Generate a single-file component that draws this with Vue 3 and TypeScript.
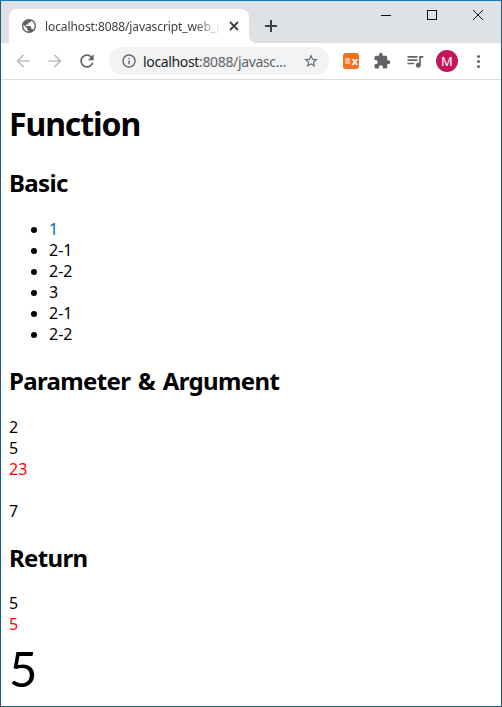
<template>
  <div class="window">
    <div class="tabstrip">
      <div class="tab">
        <svg class="favicon" viewBox="2 2 20 20"><path d="M12 2C6.48 2 2 6.48 2 12s4.48 10 10 10 10-4.48 10-10S17.52 2 12 2zm-1 17.93c-3.95-.49-7-3.85-7-7.93 0-.62.08-1.21.21-1.79L9 15v1c0 1.1.9 2 2 2v1.93zm6.9-2.54c-.26-.81-1-1.39-1.9-1.39h-1v-3c0-.55-.45-1-1-1H8v-2h2c.55 0 1-.45 1-1V7h2c1.1 0 2-.9 2-2v-.41c2.93 1.19 5 4.06 5 7.41 0 2.08-.8 3.97-2.1 5.39z" /></svg>
        <span class="tab-title">localhost:8088/javascript_web_p</span>
        <svg class="tab-close" viewBox="0 0 10 10"><path d="M1 1l8 8M9 1l-8 8" /></svg>
      </div>
      <svg class="new-tab" viewBox="0 0 12 12"><path d="M6 0v12M0 6h12" /></svg>
      <div class="caption">
        <svg viewBox="0 0 10 10"><path d="M0 5.5h10" /></svg>
        <svg viewBox="0 0 10 10"><rect x="0.5" y="0.5" width="9" height="9" /></svg>
        <svg viewBox="0 0 10 10"><path d="M0 0l10 10M10 0L0 10" /></svg>
      </div>
    </div>

    <div class="toolbar">
      <svg class="nav disabled" viewBox="0 0 24 24"><path d="M20 11H7.83l5.59-5.59L12 4l-8 8 8 8 1.41-1.41L7.83 13H20v-2z" /></svg>
      <svg class="nav disabled" viewBox="0 0 24 24"><path d="M12 4l-1.41 1.41L16.17 11H4v2h12.17l-5.58 5.59L12 20l8-8z" /></svg>
      <svg class="nav" viewBox="0 0 24 24"><path d="M17.65 6.35C16.2 4.9 14.21 4 12 4c-4.42 0-7.99 3.58-7.99 8s3.57 8 7.99 8c3.73 0 6.84-2.55 7.73-6h-2.08c-.82 2.33-3.04 4-5.65 4-3.31 0-6-2.69-6-6s2.69-6 6-6c1.66 0 3.14.69 4.22 1.78L13 11h7V4l-2.35 2.35z" /></svg>
      <div class="omnibox">
        <svg class="omni-icon" viewBox="0 0 24 24"><path d="M11 7h2v2h-2zm0 4h2v6h-2zm1-9C6.48 2 2 6.48 2 12s4.48 10 10 10 10-4.48 10-10S17.52 2 12 2zm0 18c-4.41 0-8-3.59-8-8s3.59-8 8-8 8 3.59 8 8-3.59 8-8 8z" /></svg>
        <span class="url"><span class="host">localhost</span>:8088/javasc...</span>
        <svg class="omni-icon star" viewBox="0 0 24 24"><path d="M22 9.24l-7.19-.62L12 2 9.19 8.63 2 9.24l5.46 4.73L5.82 21 12 17.27 18.18 21l-1.63-7.03L22 9.24zM12 15.4l-3.76 2.27 1-4.28-3.32-2.88 4.38-.38L12 6.1l1.71 4.04 4.38.38-3.32 2.88 1 4.28L12 15.4z" /></svg>
      </div>
      <div class="ex-badge"><i />x</div>
      <svg class="tool puzzle" viewBox="0 0 24 24"><path d="M20.5 11H19V7c0-1.1-.9-2-2-2h-4V3.5C13 2.12 11.88 1 10.5 1S8 2.12 8 3.5V5H4c-1.1 0-1.99.9-1.99 2v3.8H3.5c1.49 0 2.7 1.21 2.7 2.7s-1.21 2.7-2.7 2.7H2V20c0 1.1.9 2 2 2h3.8v-1.5c0-1.49 1.21-2.7 2.7-2.7 1.49 0 2.7 1.21 2.7 2.7V22H17c1.1 0 2-.9 2-2v-4h1.5c1.38 0 2.5-1.12 2.5-2.5S21.88 11 20.5 11z" /></svg>
      <svg class="tool queue" viewBox="0 0 24 24"><path d="M15 6H3v2h12V6zm0 4H3v2h12v-2zM3 16h8v-2H3v2zM17 6v8.18c-.31-.11-.65-.18-1-.18-1.66 0-3 1.34-3 3s1.34 3 3 3 3-1.34 3-3V8h3V6h-5z" /></svg>
      <div class="avatar">M</div>
      <div class="dots"><i /><i /><i /></div>
    </div>

    <main class="page">
      <h1>Function</h1>
      <h2>Basic</h2>
      <ul>
        <li v-for="(item, i) in basicItems" :key="i"><span :class="{ first: i === 0 }">{{ item }}</span></li>
      </ul>
      <h2>Parameter &amp; Argument</h2>
      <p>2</p>
      <p>5</p>
      <p class="red">23</p>
      <p><br /></p>
      <p>7</p>
      <h2 class="return">Return</h2>
      <p>5</p>
      <p class="red">5</p>
      <p class="huge">5</p>
    </main>
  </div>
</template>

<script setup lang="ts">
const basicItems: string[] = ['1', '2-1', '2-2', '3', '2-1', '2-2']
</script>

<style>
html,
body {
  margin: 0;
  background: #fff;
}
</style>

<style scoped>
.window {
  box-sizing: border-box;
  width: 502px;
  height: 707px;
  overflow: hidden;
  display: flex;
  flex-direction: column;
  border: 1px solid #1b5e7c;
  border-top-color: #0f7dc2;
  font-family: "Noto Sans", "Open Sans", sans-serif;
  color: #000;
  background: #fff;
}

.tabstrip {
  height: 42px;
  flex: none;
  display: flex;
  background: #dee1e6;
  padding: 8px 0 0 8px;
  box-sizing: border-box;
}
.tab {
  position: relative;
  width: 240px;
  height: 34px;
  display: flex;
  align-items: center;
  background: #fff;
  border-radius: 8px 8px 0 0;
  padding: 0 11px 0 13px;
  box-sizing: border-box;
}
.tab::after {
  content: "";
  position: absolute;
  right: -8px;
  bottom: 0;
  width: 8px;
  height: 8px;
  background: radial-gradient(circle at 100% 0, transparent 8px, #fff 8.5px);
}
.favicon {
  width: 14px;
  height: 14px;
  fill: #5f6368;
  flex: none;
}
.tab-title {
  flex: 1;
  margin-left: 9px;
  font-size: 12px;
  letter-spacing: -0.1px;
  color: #3c4043;
  white-space: nowrap;
  -webkit-mask-image: linear-gradient(to right, #000 150px, transparent 175px);
  mask-image: linear-gradient(to right, #000 150px, transparent 175px);
}
.tab-close {
  width: 10px;
  height: 10px;
  flex: none;
  margin-left: 6px;
  fill: none;
  stroke: #3c4043;
  stroke-width: 1.8;
}
.new-tab {
  width: 12px;
  height: 12px;
  margin: 11px 0 0 16px;
  flex: none;
  fill: none;
  stroke: #3c4043;
  stroke-width: 2;
}
.caption {
  display: flex;
  gap: 36px;
  margin: 1px 0 0 auto;
  padding-right: 18px;
  height: 10px;
}
.caption svg {
  width: 10px;
  height: 10px;
  fill: none;
  stroke: #111;
  stroke-width: 1;
  overflow: visible;
}

.toolbar {
  height: 37px;
  flex: none;
  display: flex;
  align-items: center;
  background: #fff;
  border-bottom: 1px solid #dadce0;
  box-sizing: border-box;
  padding-left: 12px;
}
.nav {
  width: 20px;
  height: 20px;
  margin-right: 12px;
  fill: #5f6368;
  flex: none;
}
.nav.disabled {
  fill: #bdc1c6;
}
.omnibox {
  width: 220px;
  height: 28px;
  flex: none;
  display: flex;
  align-items: center;
  background: #f1f3f4;
  border-radius: 14px;
  padding: 0 10px 0 12px;
  box-sizing: border-box;
}
.omni-icon {
  width: 16px;
  height: 16px;
  fill: #5f6368;
  flex: none;
}
.url {
  flex: 1;
  margin-left: 6px;
  font-size: 14px;
  letter-spacing: -0.35px;
  color: #5f6368;
  white-space: nowrap;
  overflow: hidden;
}
.host {
  color: #202124;
}
.ex-badge {
  position: relative;
  width: 16px;
  height: 16px;
  margin-left: 14px;
  flex: none;
  border-radius: 3px;
  background: #f37021;
  color: #fff;
  font-size: 11px;
  font-weight: 700;
  line-height: 15px;
  text-align: right;
  padding-right: 1px;
  box-sizing: border-box;
}
.ex-badge i {
  position: absolute;
  left: 2px;
  top: 5px;
  width: 5px;
  height: 6px;
  background: #f9b48a;
}
.tool {
  flex: none;
  fill: #5f6368;
}
.puzzle {
  width: 18px;
  height: 18px;
  margin-left: 14px;
}
.queue {
  width: 20px;
  height: 20px;
  margin-left: 14px;
}
.avatar {
  width: 22px;
  height: 22px;
  margin-left: 11px;
  flex: none;
  border-radius: 50%;
  background: #c2185b;
  color: #fff;
  font-size: 13px;
  line-height: 22px;
  text-align: center;
}
.dots {
  margin-left: 19px;
  display: flex;
  flex-direction: column;
  gap: 2px;
}
.dots i {
  width: 3px;
  height: 3px;
  border-radius: 50%;
  background: #5f6368;
}

.page {
  flex: 1;
  padding: 0 8px;
  font-size: 16px;
  line-height: 21px;
}
h1 {
  margin: 22px 0;
  font-size: 32px;
  line-height: 43px;
  font-weight: 700;
  letter-spacing: -1.1px;
}
h2 {
  margin: 20px 0;
  font-size: 24px;
  line-height: 32px;
  font-weight: 700;
  letter-spacing: -0.65px;
  word-spacing: 2px;
}
h2.return {
  margin-bottom: 19px;
}
ul {
  margin: 16px 0;
  padding-left: 40px;
}
.first {
  color: #0b62b0;
}
p {
  margin: 0;
}
.red {
  color: #f00;
}
.huge {
  font-family: Lato, "Noto Sans", sans-serif;
  font-size: 49px;
  line-height: 66px;
  font-weight: 400;
}
</style>
